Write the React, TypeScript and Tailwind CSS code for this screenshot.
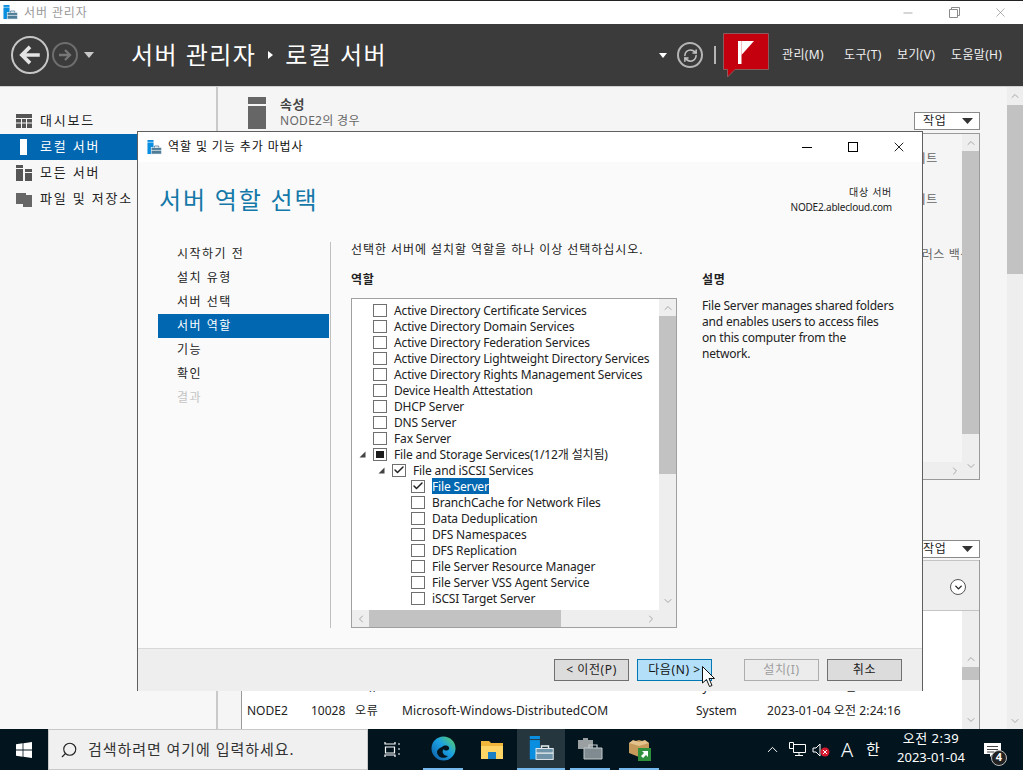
import { Check, ChevronDown, ChevronLeft, ChevronRight, ChevronUp, Minus, RefreshCw, Search, X } from "lucide-react"

const font = "font-['Noto_Sans','Noto_Sans_CJK_KR',sans-serif]"

const roles = [
  { name: "Active Directory Certificate Services", level: 0 },
  { name: "Active Directory Domain Services", level: 0 },
  { name: "Active Directory Federation Services", level: 0 },
  { name: "Active Directory Lightweight Directory Services", level: 0 },
  { name: "Active Directory Rights Management Services", level: 0 },
  { name: "Device Health Attestation", level: 0 },
  { name: "DHCP Server", level: 0 },
  { name: "DNS Server", level: 0 },
  { name: "Fax Server", level: 0 },
  { name: "File and Storage Services(1/12개 설치됨)", level: 0, state: "partial", open: true },
  { name: "File and iSCSI Services", level: 1, state: "checked", open: true },
  { name: "File Server", level: 2, state: "checked", selected: true },
  { name: "BranchCache for Network Files", level: 2 },
  { name: "Data Deduplication", level: 2 },
  { name: "DFS Namespaces", level: 2 },
  { name: "DFS Replication", level: 2 },
  { name: "File Server Resource Manager", level: 2 },
  { name: "File Server VSS Agent Service", level: 2 },
  { name: "iSCSI Target Server", level: 2 },
]

const steps = ["시작하기 전", "설치 유형", "서버 선택", "서버 역할", "기능", "확인", "결과"]

function ServerIcon({ size = 16, light = false }: { size?: number; light?: boolean }) {
  return (
    <svg width={size} height={size} viewBox="0 0 16 16">
      <rect x="0.5" y="0" width="6.5" height="2" fill="#0a8ee0" />
      <rect x="0.5" y="2.6" width="6.5" height="12.4" fill="#0a8ee0" />
      <rect x="4.5" y="8" width="11" height="7" fill={light ? "#6f93a8" : "#4f7d98"} stroke={light ? "#e6eef2" : "#fff"} strokeWidth="0.6" />
      <path d="M8 8V6.4h4.5V8" fill="none" stroke={light ? "#e6eef2" : "#4f7d98"} strokeWidth="0.9" />
      <rect x="4.5" y="10.6" width="11" height="0.7" fill="#fff" />
    </svg>
  )
}

function BackArrow({ dim = false }: { dim?: boolean }) {
  const c = dim ? "#777" : "#e4e4e4"
  return (
    <svg width="100%" height="100%" viewBox="0 0 24 24">
      <path d="M21 12H5M12 4.5 4.5 12l7.5 7.5" fill="none" stroke={c} strokeWidth="3.4" transform={dim ? "rotate(180 12 12)" : undefined} />
    </svg>
  )
}

function RoleRow({ role }: { role: (typeof roles)[number] }) {
  const indent = ["pl-[21px]", "pl-[40px]", "pl-[59px]"][role.level]
  return (
    <div className={`relative flex h-4 shrink-0 items-center ${indent}`}>
      {role.open && (
        <svg
          className={`absolute top-[5px] ${role.level === 0 ? "left-[7px]" : "left-[26px]"}`}
          width="7"
          height="7"
          viewBox="0 0 7 7"
        >
          <path d="M6.5 0.5V6.5H0.5Z" fill="#444" />
        </svg>
      )}
      <span className="flex h-[13px] w-[14px] shrink-0 items-center justify-center border border-[#6f6f6f] bg-white">
        {role.state === "checked" && <Check size={12} strokeWidth={3} className="text-[#222]" />}
        {role.state === "partial" && <span className="h-[7px] w-2 bg-[#1d1d1d]" />}
      </span>
      <span
        className={`ml-[7px] h-4 whitespace-nowrap tracking-[-0.15px] ${role.selected ? "bg-[#0067b0] text-white" : "text-[#222]"}`}
      >
        {role.name}
      </span>
    </div>
  )
}

function Scrollbar() {
  return (
    <div className="flex w-[17px] flex-col items-center bg-[#eeeeee]">
      <div className="flex h-[17px] items-center">
        <ChevronUp size={12} className="text-[#a6a6a6]" />
      </div>
      <div className="h-[158px] w-full bg-[#c2c2c2]" />
      <div className="flex-1" />
      <div className="flex h-[18px] items-center">
        <ChevronDown size={12} className="text-[#a6a6a6]" />
      </div>
    </div>
  )
}

function WizardButton({ label, className }: { label: string; className: string }) {
  return (
    <button className={`flex h-[22px] w-[75px] items-center justify-center border text-[12px] tracking-[0.6px] ${className}`}>{label}</button>
  )
}

function Wizard() {
  return (
    <div className="absolute left-[137px] top-[131px] flex h-[560px] w-[786px] flex-col border border-[#5f5f5f] bg-white">
      <div className="flex h-[30px] shrink-0 items-center pl-[9px]">
        <ServerIcon size={15} />
        <span className="ml-[6px] text-[12px] tracking-[0.9px] text-[#111]">역할 및 기능 추가 마법사</span>
        <div className="ml-auto flex items-center text-black">
          <div className="flex w-[46px] justify-center">
            <span className="h-px w-[10px] bg-black" />
          </div>
          <div className="flex w-[46px] justify-center">
            <span className="h-[10px] w-[10px] border border-black" />
          </div>
          <div className="flex w-[46px] justify-center">
            <X size={16} strokeWidth={1.3} />
          </div>
        </div>
      </div>
      <div className="flex flex-1 flex-col bg-[#fafafa]">
        <div className="flex h-[80px] shrink-0 justify-between pl-[21px] pr-[30px]">
          <h1 className="mt-[19px] text-[24px] font-normal leading-[38px] tracking-[1.8px] text-[#1478a8]">서버 역할 선택</h1>
          <div className="mt-[23px] text-right text-[10px] leading-[15px] text-[#222]">
            <div className="tracking-[0.7px]">대상 서버</div>
            <div className="tracking-[-0.2px]">NODE2.ablecloud.com</div>
          </div>
        </div>
        <div className="flex flex-1 pb-5 pl-5 text-[12px]">
          <div className="w-[171px]">
            {steps.map((step) => (
              <div
                key={step}
                className={`flex h-6 items-center pl-[19px] tracking-[1.5px] ${
                  step === "서버 역할" ? "bg-[#0067b0] text-white" : step === "결과" ? "text-[#c4c4c4]" : "text-[#222]"
                }`}
              >
                {step}
              </div>
            ))}
          </div>
          <div className="ml-px w-px bg-[#c0c0c0]" />
          <div className="flex flex-1 flex-col pl-5">
            <p className="h-4 leading-[16px] tracking-[0.95px] text-[#222]">선택한 서버에 설치할 역할을 하나 이상 선택하십시오.</p>
            <div className="mt-[14px] flex flex-1">
              <div className="flex w-[326px] flex-col">
                <div className="h-4 font-bold leading-[16px] tracking-[0.8px] text-[#222]">역할</div>
                <div className="mt-[10px] flex flex-col border border-[#a0a0a0] bg-white">
                  <div className="flex h-[311px]">
                    <div className="flex flex-1 flex-col overflow-hidden pt-[3px]">
                      {roles.map((role) => (
                        <RoleRow key={role.name} role={role} />
                      ))}
                    </div>
                    <Scrollbar />
                  </div>
                  <div className="flex h-[17px] items-center bg-[#eeeeee]">
                    <div className="flex w-[17px] justify-center">
                      <ChevronLeft size={12} className="text-[#a6a6a6]" />
                    </div>
                    <div className="h-full w-[192px] bg-[#c2c2c2]" />
                    <div className="flex-1" />
                    <div className="flex w-[17px] justify-center">
                      <ChevronRight size={12} className="text-[#a6a6a6]" />
                    </div>
                    <div className="w-[17px]" />
                  </div>
                </div>
              </div>
              <div className="ml-[25px] w-[193px]">
                <div className="h-4 font-bold leading-[16px] tracking-[0.8px] text-[#222]">설명</div>
                <p className="mt-[10px] leading-[16px] tracking-[-0.18px] text-[#222]">
                  File Server manages shared folders and enables users to access files on this computer from the network.
                </p>
              </div>
            </div>
          </div>
        </div>
      </div>
      <div className="flex h-[43px] shrink-0 items-center justify-end gap-2 border-t border-[#d8d8d8] bg-[#eeeeee] pr-5">
        <WizardButton label="< 이전(P)" className="border-[#707070] bg-[#dcdcdc] text-[#222]" />
        <WizardButton label="다음(N) >" className="border-[#0078b4] bg-[#b3dff8] text-[#111]" />
        <WizardButton label="설치(I)" className="ml-6 border-[#adadad] bg-[#ececec] text-[#9d9d9d]" />
        <WizardButton label="취소" className="border-[#707070] bg-[#dcdcdc] text-[#222]" />
      </div>
    </div>
  )
}

function Sidebar() {
  const items = [
    { label: "대시보드", icon: <rect x="0" y="1" width="16" height="14" fill="#555" /> },
    { label: "로컬 서버", icon: <rect x="4" y="0" width="7" height="16" fill="#fff" />, active: true },
    { label: "모든 서버", icon: <path d="M0 0h7v16H0zM9 4h7v12H9z" fill="#555" /> },
    { label: "파일 및 저장소", icon: <path d="M0 2h10v2h6v12H7v-3H0z" fill="#666" /> },
  ]
  return (
    <aside className="w-[218px] shrink-0 border-r-2 border-[#c9c9c9] bg-[#f7f7f7] pt-[21px]">
      {items.map((item) => (
        <div
          key={item.label}
          className={`flex h-[26px] items-center overflow-hidden whitespace-nowrap pl-4 text-[13px] tracking-[1.8px] ${
            item.active ? "bg-[#0067b0] text-white" : "text-[#222]"
          }`}
        >
          <svg width="16" height="16" viewBox="0 0 16 16" className="mr-2 shrink-0">
            {item.icon}
            {item.label === "대시보드" && <path d="M0 5.5h16M0 10h16M5.5 5v10M10.5 5v10" stroke="#f7f7f7" strokeWidth="1" />}
            {item.label === "모든 서버" && <path d="M0 3.5h7M9 7.5h7" stroke="#f7f7f7" strokeWidth="1" />}
          </svg>
          {item.label}
        </div>
      ))}
    </aside>
  )
}

function EventRow() {
  return (
    <div className="flex h-6 shrink-0 items-center whitespace-nowrap bg-white text-[12px] text-[#222]">
      <span className="w-[69px] pl-[5px]">NODE2</span>
      <span className="w-[44px]">10028</span>
      <span className="w-[47px] tracking-[0.8px]">오류</span>
      <span className="w-[294px] tracking-[0.1px]">Microsoft-Windows-DistributedCOM</span>
      <span className="w-[71px]">System</span>
      <span className="tracking-[0.1px]">2023-01-04 오전 2:24:16</span>
    </div>
  )
}

function TasksButton() {
  return (
    <div className="flex h-[18px] w-[66px] items-center justify-between border border-[#8a8a8a] bg-white pl-2 pr-[6px] text-[12px] tracking-[0.8px] text-[#222]">
      작업
      <svg width="11" height="6" viewBox="0 0 11 6">
        <path d="M0 0h11L5.5 6Z" fill="#333" />
      </svg>
    </div>
  )
}

function Main() {
  return (
    <main className="flex min-w-0 flex-1 bg-[#f5f5f5]">
      <div className="flex min-w-0 flex-1 flex-col pl-[23px] pr-[27px] pt-[10px]">
        <div className="flex h-[36px] shrink-0 pl-[7px]">
          <svg width="18" height="32" viewBox="0 0 18 32" className="mr-[14px] shrink-0">
            <rect width="18" height="7" fill="#666" />
            <rect y="9" width="18" height="23" fill="#666" />
          </svg>
          <div className="-mt-px text-[#444]">
            <div className="text-[13px] font-semibold leading-[16px] tracking-[0.5px]">속성</div>
            <div className="text-[12px] leading-[18px] tracking-[0.3px] text-[#666]">NODE2의 경우</div>
          </div>
          <div className="ml-auto mt-[15px]">
            <TasksButton />
          </div>
        </div>
        <div className="flex h-[347px] shrink-0 border border-[#9a9a9a]">
          <div className="flex flex-1 flex-col overflow-hidden">
            <div className="flex flex-1 flex-col overflow-hidden pt-4 text-[12px] tracking-[0.6px] text-[#666]">
              <div className="flex h-[41px] shrink-0 justify-end pr-[24px]">데이트</div>
              <div className="flex h-[55px] shrink-0 justify-end pr-[24px]">데이트</div>
              <div className="-mr-[10px] flex h-4 shrink-0 justify-end whitespace-nowrap">바이러스 백신</div>
            </div>
            <div className="flex h-[17px] items-center justify-end bg-[#eeeeee] pr-[1px]">
              <ChevronRight size={12} className="text-[#a6a6a6]" />
            </div>
          </div>
          <div className="flex w-[17px] flex-col items-center bg-[#eeeeee]">
            <div className="flex h-[17px] items-center">
              <ChevronUp size={12} className="text-[#a6a6a6]" />
            </div>
            <div className="h-[283px] w-full bg-[#c2c2c2]" />
            <div className="flex-1" />
            <div className="flex h-[27px] items-center">
              <ChevronDown size={12} className="text-[#a6a6a6]" />
            </div>
          </div>
        </div>
        <div className="mt-[60px] flex shrink-0 justify-end">
          <TasksButton />
        </div>
        <div className="mt-[2px] flex min-h-0 flex-1 flex-col border-x border-[#9a9a9a]">
          <div className="flex h-[51px] shrink-0 items-center justify-end border-y border-[#c4c4c4] bg-[#eeeeee] pr-[13px] pt-[3px]">
            <span className="flex h-4 w-4 items-center justify-center rounded-full border border-[#555] bg-white">
              <ChevronDown size={11} strokeWidth={3} className="text-[#222]" />
            </span>
          </div>
          <div className="flex min-h-0 flex-1">
            <div className="flex flex-1 flex-col justify-end overflow-hidden bg-white pb-[6px]">
              <EventRow />
              <EventRow />
            </div>
            <div className="flex w-[17px] flex-col items-center bg-[#eeeeee] pt-[39px]">
              <div className="flex h-[17px] items-center">
                <ChevronUp size={12} className="text-[#a6a6a6]" />
              </div>
              <div className="h-[13px] w-full bg-[#c2c2c2]" />
              <div className="flex-1" />
              <div className="flex h-[18px] items-center">
                <ChevronDown size={12} className="text-[#a6a6a6]" />
              </div>
            </div>
          </div>
        </div>
      </div>
      <div className="flex w-4 shrink-0 flex-col items-center bg-[#eeeeee]">
        <div className="flex h-[18px] items-center">
          <ChevronUp size={12} className="text-[#a6a6a6]" />
        </div>
        <div className="h-[169px] w-full bg-[#c2c2c2]" />
        <div className="flex-1" />
        <div className="flex h-4 items-center">
          <ChevronDown size={12} className="text-[#a6a6a6]" />
        </div>
      </div>
    </main>
  )
}

function Header() {
  return (
    <header className="flex h-[63px] shrink-0 items-center border-b border-[#d0d0d0] bg-[#3b3b3b] text-white">
      <div className="ml-[11px] flex items-center">
        <span className="h-[38px] w-[38px] rounded-full border-2 border-[#c6c6c6] p-[4px]">
          <BackArrow />
        </span>
        <span className="ml-[3px] h-[26px] w-[26px] rounded-full border-2 border-[#6e6e6e] p-[3px]">
          <BackArrow dim />
        </span>
        <svg width="10" height="6" viewBox="0 0 10 6" className="ml-[6px]">
          <path d="M0 0h10L5 6Z" fill="#c8c8c8" />
        </svg>
      </div>
      <div className="ml-[37px] flex items-center text-[24px] tracking-[1.45px]">
        서버 관리자
        <svg width="5" height="8" viewBox="0 0 5 8" className="mx-[12px]">
          <path d="M0 0l5 4-5 4Z" fill="#fff" />
        </svg>
        로컬 서버
      </div>
      <div className="ml-auto flex items-center">
        <svg width="8" height="5" viewBox="0 0 8 5" className="mr-[10px]">
          <path d="M0 0h8L4 5Z" fill="#fff" />
        </svg>
        <span className="flex h-[26px] w-[26px] items-center justify-center rounded-full border-2 border-[#b5b5b5]">
          <RefreshCw size={15} strokeWidth={2.4} className="text-[#c4c4c4]" />
        </span>
        <span className="ml-[11px] h-[18px] w-[2px] bg-[#b5b5b5]" />
        <svg width="47" height="46" viewBox="0 0 47 46" className="ml-[7px] mt-[2px]">
          <path d="M0.5 0.5h45v36H12L4.5 44v-7.5h-4Z" fill="#c4000f" stroke="#8a5a5c" />
          <rect x="15" y="8" width="3.5" height="23" fill="#fff" />
          <path d="M18.5 8H31L18.5 22Z" fill="#fff" />
        </svg>
        <nav className="ml-[12px] flex text-[12px] tracking-[0.35px] text-[#f0f0f0]">
          <span className="w-[62px]">관리(M)</span>
          <span className="w-[53px]">도구(T)</span>
          <span className="w-[54px]">보기(V)</span>
          <span className="w-[72px]">도움말(H)</span>
        </nav>
      </div>
    </header>
  )
}

function Taskbar() {
  return (
    <footer className="flex h-[41px] shrink-0 items-stretch bg-[#02151e] text-white">
      <div className="flex w-12 items-center justify-center">
        <svg width="16" height="16" viewBox="0 0 16 16" fill="#fff">
          <path d="M0 2.3 6.6 1.3V7.6H0ZM7.4 1.2 16 0V7.6H7.4ZM0 8.4H6.6V14.7L0 13.7ZM7.4 8.4H16V16L7.4 14.8Z" />
        </svg>
      </div>
      <div className="flex w-[320px] items-center border border-[#c8c8c8] bg-[#f0f0f0] pl-[11px] text-[15px] tracking-[0.95px] text-[#333]">
        <Search size={18} strokeWidth={1.5} className="-scale-x-100 text-[#222]" />
        <span className="ml-[10px]">검색하려면 여기에 입력하세요.</span>
      </div>
      <div className="flex w-[48px] items-center justify-center">
        <svg width="17" height="17" viewBox="0 0 17 17" fill="none" stroke="#fff" strokeWidth="1.2">
          <path d="M1 1v2h10V1M1 16v-2h10v2M1.5 6h9v6h-9zM14 3h2M14 8h2M14 13h2" />
        </svg>
      </div>
      <div className="ml-[7px] flex w-[40px] items-center justify-center border-b-2 border-[#76b9ed]">
        <svg width="25" height="25" viewBox="0 0 25 25">
          <defs>
            <linearGradient id="edge" x1="0" y1="1" x2="1" y2="0">
              <stop offset="0" stopColor="#0c59a4" />
              <stop offset="0.55" stopColor="#1ba1e2" />
              <stop offset="1" stopColor="#5fd35b" />
            </linearGradient>
          </defs>
          <circle cx="12.5" cy="12.5" r="12" fill="url(#edge)" />
          <path d="M11 11c3-3 8-1 7 2-1 2-5 2-5 0-3 2-1 7 4 7-4 4-11 1-11-4 0-2 2-4 5-5Z" fill="#02151e" />
        </svg>
      </div>
      <div className="flex w-[54px] items-center justify-center pl-1">
        <svg width="22" height="18" viewBox="0 0 22 18">
          <path d="M0 0h8l2 2h12v16H0Z" fill="#f0b73c" />
          <path d="M0 5h22v13H0Z" fill="#ffd666" />
          <rect x="7" y="11" width="8" height="7" fill="#1a7fc4" />
        </svg>
      </div>
      <div className="flex w-[48px] items-center justify-center border-b-2 border-[#76b9ed] bg-[#26363f]">
        <ServerIcon size={25} light />
      </div>
      <div className="ml-[5px] flex w-[40px] items-center justify-center border-b-2 border-[#76b9ed]">
        <svg width="25" height="23" viewBox="0 0 25 23">
          <path d="M0 3h5V1h5v2h5v9H0Z" fill="#9aa0a2" />
          <path d="M6 11h18v11H6Z" fill="#7f8b90" stroke="#c4cacc" strokeWidth="1" />
          <path d="M11 11V8h8v3" fill="none" stroke="#c4cacc" strokeWidth="1.2" />
        </svg>
      </div>
      <div className="ml-[9px] flex w-[40px] items-center justify-center border-b-2 border-[#76b9ed]">
        <svg width="24" height="24" viewBox="0 0 24 24">
          <path d="M2 6 12 3l10 3v10l-10 4-10-4Z" fill="#c69a5b" />
          <path d="M2 6l10 3 10-3-4-3-6 2-6-2Z" fill="#e3c28c" />
          <rect x="11" y="11" width="13" height="13" fill="#2f8f3a" />
          <path d="M21 14l-6 0 2 2-3 3 2 2 3-3 2 2Z" fill="#fff" />
        </svg>
      </div>
      <div className="ml-auto flex items-center">
        <ChevronUp size={17} strokeWidth={1.4} className="mr-2" />
        <svg width="17" height="15" viewBox="0 0 17 15" fill="none" stroke="#fff" className="mr-[6px]">
          <path d="M4.5 2.5h12v8h-12zM10 10.5v3M6 13.5h8M.5.5h4v6h-4z" />
        </svg>
        <svg width="18" height="14" viewBox="0 0 18 14" className="mr-[6px]">
          <path d="M1 5h3l4-4v12L4 9H1Z" fill="none" stroke="#fff" />
          <circle cx="13" cy="9" r="4.5" fill="#d8182c" />
          <path d="M11 7l4 4M15 7l-4 4" stroke="#fff" />
        </svg>
        <span className="w-[22px] text-center text-[20px] font-light">A</span>
        <span className="ml-[7px] w-[16px] text-center text-[15px]">한</span>
        <div className="ml-[10px] w-[80px] pb-1 text-center text-[13px] leading-[19px]">
          <div className="tracking-[0.5px]">오전 2:39</div>
          <div>2023-01-04</div>
        </div>
        <div className="relative ml-[13px] mr-[22px] h-6 w-[17px]">
          <svg width="17" height="14" viewBox="0 0 17 14" className="mt-[5px]">
            <path d="M0 0h17v11H9l-3 3v-3H0Z" fill="#fff" />
            <path d="M3 3.5h11M3 6.5h11M3 9h7" stroke="#444" />
          </svg>
          <span className="absolute left-[7px] top-[12px] flex h-4 w-4 items-center justify-center rounded-full border border-[#bbb] bg-[#222] text-[11px] font-bold">
            4
          </span>
        </div>
      </div>
    </footer>
  )
}

export default function App() {
  return (
    <div className={`relative flex h-[770px] w-[1023px] flex-col overflow-hidden bg-white ${font}`}>
      <div className="flex h-6 shrink-0 items-center border-t border-[#222] pl-[3px] text-[12px] text-[#999]">
        <ServerIcon size={15} />
        <span className="ml-[6px] tracking-[0.9px]">서버 관리자</span>
        <div className="ml-auto flex items-center text-[#8a8a8a]">
          <div className="flex w-[46px] justify-center">
            <Minus size={14} strokeWidth={1.2} />
          </div>
          <div className="flex w-[46px] justify-center">
            <svg width="11" height="11" viewBox="0 0 11 11" fill="none" stroke="currentColor">
              <path d="M.5 2.5h8v8h-8zM2.5 2.5v-2h8v8h-2" />
            </svg>
          </div>
          <div className="flex w-[46px] justify-center">
            <X size={15} strokeWidth={1.1} />
          </div>
        </div>
      </div>
      <Header />
      <div className="flex min-h-0 flex-1">
        <Sidebar />
        <Main />
      </div>
      <Taskbar />
      <Wizard />
      <svg className="absolute left-[702px] top-[666px]" width="13" height="21" viewBox="0 0 13 21">
        <path d="M.5.5V17l4-3.5 3 7 2.5-1-3-7h5.5Z" fill="#fff" stroke="#111" />
      </svg>
    </div>
  )
}
